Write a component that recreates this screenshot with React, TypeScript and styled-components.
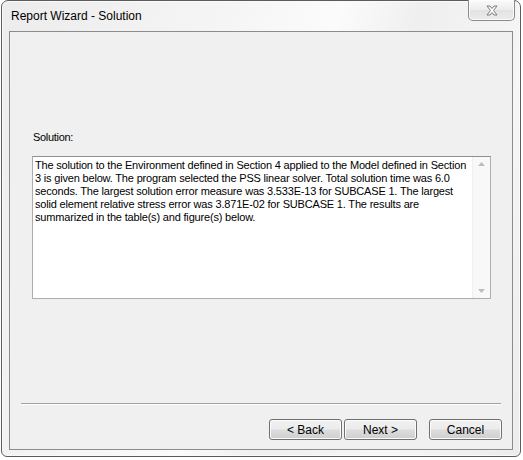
import React from "react";
import styled, { createGlobalStyle } from "styled-components";

const Global = createGlobalStyle`
  html, body { margin: 0; padding: 0; background: #ffffff; }
  body { font-family: "Liberation Sans", Arial, sans-serif; }
`;

const Window = styled.div`
  box-sizing: border-box;
  position: relative;
  margin-left: 1px;
  width: 520px;
  height: 457px;
  border: 1px solid #5c5c5c;
  border-radius: 7px 7px 6px 6px;
  background: linear-gradient(110deg, #ececec 0%, #f4f4f4 30%, #fbfbfb 50%, #efefef 62%, #f6f6f6 80%, #ececec 100%);
  box-shadow: inset 0 0 0 1px #fafafa;
  display: flex;
  flex-direction: column;
`;

const TitleBar = styled.div`
  height: 30px;
  display: flex;
  align-items: center;
  padding-left: 9px;
  font-size: 12px;
  color: #000;
`;

const CloseButton = styled.div`
  position: absolute;
  top: -1px;
  right: 5px;
  width: 47px;
  height: 21px;
  box-sizing: border-box;
  border: 1px solid #8a8a8a;
  border-top: none;
  border-radius: 0 0 5px 5px;
  background: linear-gradient(#fbfbfb, #ececec 50%, #e2e2e2 51%, #ececec);
  box-shadow: inset 0 0 0 1px rgba(255, 255, 255, 0.8);
  display: flex;
  align-items: center;
  justify-content: center;
`;

const Client = styled.div`
  box-sizing: border-box;
  margin-left: 7px;
  width: 504px;
  height: 419px;
  border: 1px solid #8c8c8c;
  background: #f0f0f0;
  display: flex;
  flex-direction: column;
  padding-bottom: 9px;
`;

const Label = styled.div`
  margin: 99px 0 0 23px;
  font-size: 11px;
  line-height: 13px;
  letter-spacing: -0.3px;
  color: #000;
`;

const TextBox = styled.div`
  box-sizing: border-box;
  margin: 12px 0 0 22px;
  width: 459px;
  height: 143px;
  border: 1px solid #abadb3;
  border-top-color: #8e8f8f;
  background: #fff;
  display: flex;
`;

const TextArea = styled.div`
  flex: 1;
  padding: 2px 0 0 2px;
  font-size: 11px;
  line-height: 13px;
  letter-spacing: -0.18px;
  color: #000;
`;

const Line = styled.span`
  display: block;
  white-space: nowrap;
`;

const ScrollBar = styled.div`
  width: 17px;
  background: #f8f8f8;
  border-left: 1px solid #f0f0f0;
  display: flex;
  flex-direction: column;
  justify-content: space-between;
  align-items: center;
  padding: 5px 0 5px;
`;

const Separator = styled.div`
  margin: auto 11px 0 11px;
  height: 0;
  border-top: 1px solid #a0a0a0;
  border-bottom: 1px solid #ffffff;
`;

const ButtonRow = styled.div`
  margin: 14px 10px 0 0;
  display: flex;
  justify-content: flex-end;
`;

const Button = styled.div<{ $gap: number }>`
  box-sizing: border-box;
  width: 73px;
  height: 21px;
  margin-left: ${(p) => p.$gap}px;
  border: 1px solid #707070;
  border-radius: 3px;
  background: linear-gradient(#f2f2f2 0%, #ebebeb 48%, #dddddd 52%, #cfcfcf 100%);
  box-shadow: inset 0 0 0 1px #fcfcfc;
  display: flex;
  align-items: center;
  justify-content: center;
  font-size: 12px;
  color: #000;
`;

const Arrow = ({ up }: { up?: boolean }) => (
  <svg width="7" height="4" viewBox="0 0 7 4">
    <polygon points={up ? "0,4 3.5,0 7,4" : "0,0 7,0 3.5,4"} fill="#bcbcbc" />
  </svg>
);

const CloseIcon = () => (
  <svg width="12" height="11" viewBox="0 0 12 11">
    <path
      d="M1 1 H4 L6 3.5 L8 1 H11 L7.5 5.5 L11 10 H8 L6 7.5 L4 10 H1 L4.5 5.5 Z"
      fill="#ffffff"
      stroke="#7a7a7a"
      strokeWidth="1"
      strokeLinejoin="round"
    />
  </svg>
);

const lines = [
  "The solution to the Environment defined in Section 4 applied to the Model defined in Section",
  "3 is given below. The program selected the PSS linear solver. Total solution time was 6.0",
  "seconds. The largest solution error measure was 3.533E-13 for SUBCASE 1. The largest",
  "solid element relative stress error was 3.871E-02 for SUBCASE 1. The results are",
  "summarized in the table(s) and figure(s) below.",
];

export default function App() {
  return (
    <>
      <Global />
      <Window>
        <TitleBar>Report Wizard - Solution</TitleBar>
        <CloseButton>
          <CloseIcon />
        </CloseButton>
        <Client>
          <Label>Solution:</Label>
          <TextBox>
            <TextArea>
              {lines.map((l) => (
                <Line key={l}>{l}</Line>
              ))}
            </TextArea>
            <ScrollBar>
              <Arrow up />
              <Arrow />
            </ScrollBar>
          </TextBox>
          <Separator />
          <ButtonRow>
            <Button $gap={0}>&lt; Back</Button>
            <Button $gap={2}>Next &gt;</Button>
            <Button $gap={12}>Cancel</Button>
          </ButtonRow>
        </Client>
      </Window>
    </>
  );
}
